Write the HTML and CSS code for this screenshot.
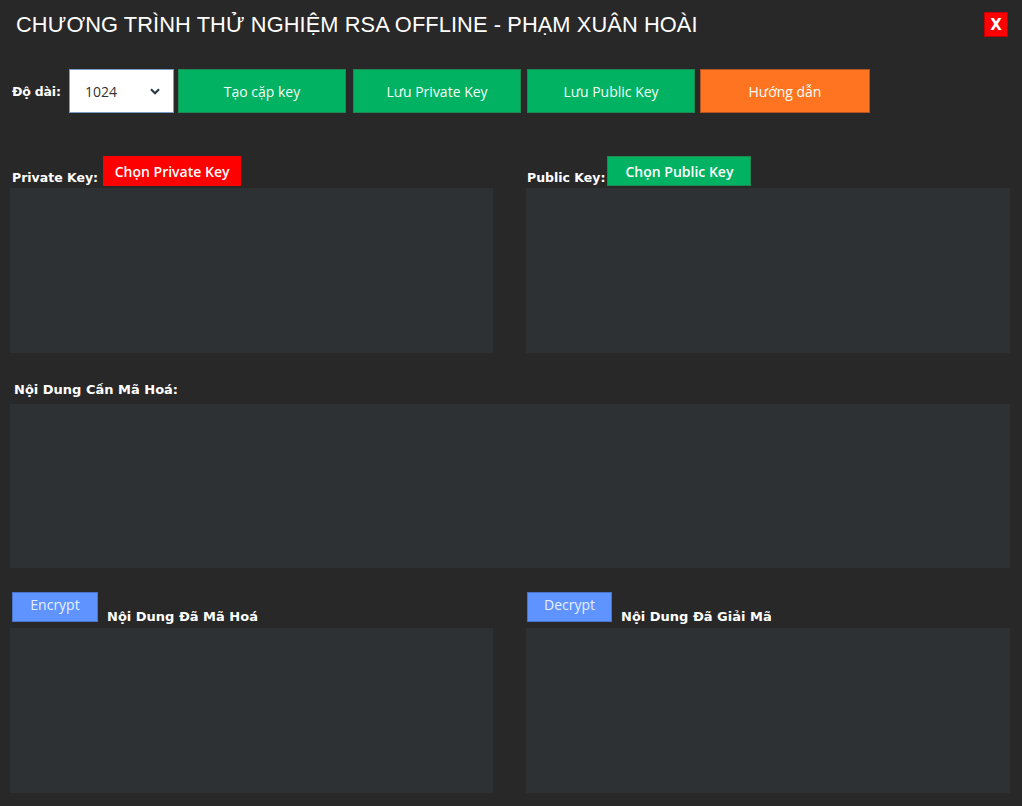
FILE: index.html
```html
<!DOCTYPE html>
<html lang="vi">
<head>
<meta charset="utf-8">
<title>RSA Offline</title>
<link rel="stylesheet" href="styles.css">
</head>
<body>
<div class="app">
  <header class="titlebar">
    <h1 class="title">CHƯƠNG TRÌNH THỬ NGHIỆM RSA OFFLINE - PHẠM XUÂN HOÀI</h1>
    <button class="close">X</button>
  </header>

  <div class="toolbar">
    <span class="label">Độ dài:</span>
    <div class="select">
      <span>1024</span>
      <svg class="chev" width="10" height="7" viewBox="0 0 10 7"><path d="M1 1.2 L5 5.2 L9 1.2" fill="none" stroke="#2b3a4a" stroke-width="2.2"/></svg>
    </div>
    <button class="btn green b1">Tạo cặp key</button>
    <button class="btn green b2">Lưu Private Key</button>
    <button class="btn green b3">Lưu Public Key</button>
    <button class="btn orange">Hướng dẫn</button>
  </div>

  <div class="pair keys">
    <section class="col">
      <div class="head">
        <span class="label">Private Key:</span>
        <button class="pick red">Chọn Private Key</button>
      </div>
      <div class="box"></div>
    </section>
    <section class="col">
      <div class="head">
        <span class="label">Public Key:</span>
        <button class="pick greenpick">Chọn Public Key</button>
      </div>
      <div class="box"></div>
    </section>
  </div>

  <section class="plain">
    <div class="label plainlabel">Nội Dung Cần Mã Hoá:</div>
    <div class="box"></div>
  </section>

  <div class="pair results">
    <section class="col">
      <div class="head2">
        <button class="act">Encrypt</button>
        <span class="label">Nội Dung Đã Mã Hoá</span>
      </div>
      <div class="box"></div>
    </section>
    <section class="col">
      <div class="head2">
        <button class="act">Decrypt</button>
        <span class="label">Nội Dung Đã Giải Mã</span>
      </div>
      <div class="box"></div>
    </section>
  </div>
</div>
</body>
</html>
```

FILE: styles.css
```css
* { box-sizing: border-box; }
html, body { margin: 0; padding: 0; }
body {
  background: #282828;
  width: 1022px;
  height: 806px;
  overflow: hidden;
  font-family: "DejaVu Sans", "Liberation Sans", sans-serif;
  color: #ffffff;
}
.app {
  padding: 0 12px 0 10px;
  display: flex;
  flex-direction: column;
}
.titlebar {
  display: flex;
  justify-content: space-between;
  align-items: flex-start;
  height: 69px;
  padding-top: 12px;
}
.title {
  margin: 0 0 0 6px;
  font-family: "Liberation Sans", Arial, sans-serif;
  font-weight: normal;
  font-size: 21.8px;
  line-height: 25px;
  letter-spacing: 0.1px;
  color: #ffffff;
}
.close {
  width: 24px;
  height: 25px;
  margin-right: 2px;
  background: #ff0000;
  border: 1px solid #c40000;
  color: #fff;
  font-family: "DejaVu Sans", sans-serif;
  font-weight: bold;
  font-size: 15px;
  padding: 0;
}
.toolbar {
  display: flex;
  align-items: center;
  height: 44px;
}
.label {
  font-family: "DejaVu Sans", sans-serif;
  font-weight: bold;
  font-size: 13px;
  color: #ffffff;
  white-space: nowrap;
}
.toolbar .label { margin-left: 2px; width: 57px; font-size: 12.5px; letter-spacing: -0.2px; }
.select {
  width: 105px;
  height: 44px;
  background: #ffffff;
  border: 1px solid #7a9cc6;
  display: flex;
  align-items: center;
  justify-content: space-between;
  padding: 0 13px 0 15px;
  font-family: "Open Sans", sans-serif;
  font-size: 14px;
  color: #333;
  margin-right: 4px;
}
.btn {
  height: 44px;
  width: 168px;
  border: 1px solid #1d8a52;
  font-family: "Open Sans", sans-serif;
  font-size: 14px;
  color: #f4fff8;
  padding: 0;
}
.b1 { margin-right: 7px; }
.b2 { margin-right: 6px; }
.b3 { margin-right: 5px; }
.green { background: #00b262; }
.orange { background: #ff7420; border-color: #b55420; width: 170px; }
.pair {
  display: grid;
  grid-template-columns: 483px 484px;
  column-gap: 33px;
}
.keys { margin-top: 43px; }
.head {
  display: flex;
  align-items: flex-end;
  height: 30px;
  margin-bottom: 2px;
}
.head .label { font-size: 12.5px; padding-bottom: 1px; margin-left: 2px; margin-right: 5px; }
.col:last-child .head .label { margin-left: 1px; margin-right: 2px; }
.pick {
  height: 30px;
  border: none;
  font-family: "Open Sans", sans-serif;
  font-weight: 600;
  font-size: 14px;
  color: #fff;
  padding: 0 6px;
}
.red { background: #ff0000; width: 138px; }
.greenpick { background: #00b262; border: 1px solid #1d8a52; width: 144px; }
.box {
  background: #2d3134;
  height: 165px;
}
.plainlabel { height: 51px; padding: 29px 0 0 4px; }
.plain .box { height: 164px; }
.results { margin-top: 24px; }
.head2 {
  display: flex;
  align-items: flex-end;
  height: 30px;
  margin-bottom: 6px;
}
.act {
  height: 30px;
  width: 86px;
  background: #5f93ff;
  border: 1px solid #4a74c8;
  font-family: "Open Sans", sans-serif;
  font-size: 14px;
  color: #e8f0ff;
  padding: 0 0 5px;
  margin-left: 2px;
  margin-right: 9px;
}
.col:last-child .act { margin-left: 1px; width: 85px; }
.head2 .label { margin-bottom: -2px; }
```
